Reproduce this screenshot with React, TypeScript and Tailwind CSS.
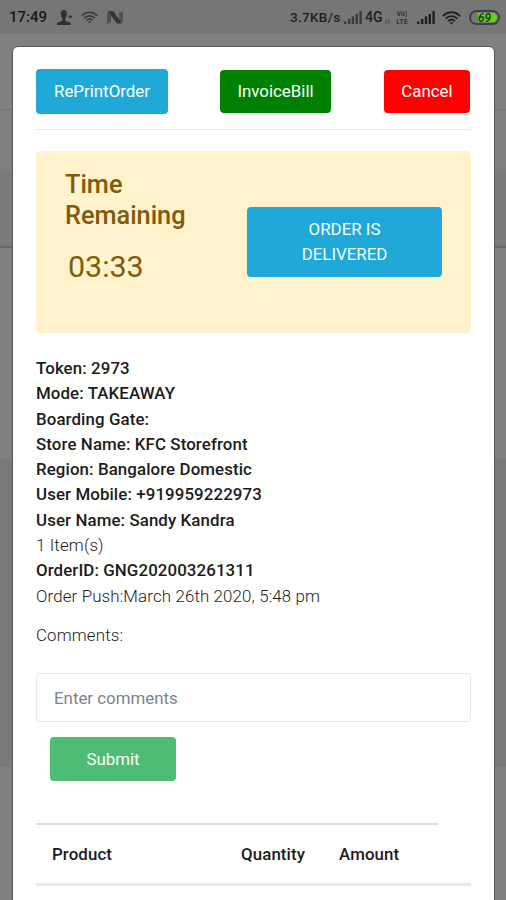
import clsx from "clsx";

const details = [
  { text: "Token: 2973", bold: true },
  { text: "Mode: TAKEAWAY", bold: true },
  { text: "Boarding Gate:", bold: true },
  { text: "Store Name: KFC Storefront", bold: true },
  { text: "Region: Bangalore Domestic", bold: true },
  { text: "User Mobile: +919959222973", bold: true },
  { text: "User Name: Sandy Kandra", bold: true },
  { text: "1 Item(s)", bold: false },
  { text: "OrderID: GNG202003261311", bold: true },
  { text: "Order Push:March 26th 2020, 5:48 pm", bold: false },
];

function SignalBars({ className }: { className?: string }) {
  return (
    <svg viewBox="0 0 18 13" className={clsx("h-[13px] w-[18px]", className)} fill="currentColor">
      <rect x="0" y="10.5" width="2.4" height="2.5" />
      <rect x="4" y="8" width="2.4" height="5" />
      <rect x="7.8" y="5.5" width="2.4" height="7.5" />
      <rect x="11.6" y="3" width="2.4" height="10" />
      <rect x="15.4" y="0" width="2.4" height="13" />
    </svg>
  );
}

function WifiIcon({ className }: { className?: string }) {
  return (
    <svg viewBox="0 0 20 14" className={className} fill="none" stroke="currentColor" strokeWidth="2">
      <path d="M1 5C6-.4 14-.4 19 5" />
      <path d="M3.8 7.700c3.500-3.600 8.900-3.600 12.400 0" />
      <path d="M6.600 10.400c2-2 4.800-2 6.800 0" />
      <path d="M8 11.500h4L10 14z" fill="currentColor" stroke="none" />
    </svg>
  );
}

function StatusBar() {
  return (
    <div className="flex h-[34px] items-center bg-[#767676] pt-px text-[#202020]">
      <span className="ml-[9px] w-[39px] text-[15px] font-medium leading-[33px] text-[#181818]">17:49</span>
      <svg viewBox="0 0 17 16" className="ml-[8px] h-[15px] w-[17px] text-[#303030]" fill="currentColor">
        <path d="M7.800 0C5.700 0 4.600 1.600 4.600 3.900c0 2.300.8 3.900 1.600 5V11.500L.5 13.700V16h14.500v-2.300L9.400 11.500V8.900c.8-1.100 1.600-2.700 1.600-5C11 1.600 9.900 0 7.800 0z" />
        <path d="M13 6.500h1V5.500h1.400v1h1v1.400h-1v1H14v-1h-1z" />
      </svg>
      <WifiIcon className="ml-[8px] h-[13px] w-[17px] text-[#3b3b3b]" />
      <svg viewBox="0 0 16 13" className="ml-[9px] h-[13px] w-[16px]">
        <path d="M0 1.500 4 .5v10.500L0 13zM12 2l4-2v10.500l-4 2z" fill="#505050" />
        <path d="M1 0h5.200l8.800 12.500H9.800z" fill="#363636" />
      </svg>
      <div className="ml-auto flex h-full items-center pr-[6px]">
        <span className="w-[51px] whitespace-nowrap text-[13.500px] font-medium tracking-[0.300px]">3.7KB/s</span>
        <SignalBars className="ml-[3px] text-[#3b3b3b]" />
        <span className="ml-[3px] w-[18px] text-[14px] font-medium">4G</span>
        <svg viewBox="0 0 6 5" className="mt-[7px] ml-[2px] h-[5px] w-[5px] text-[#484848]" fill="none" stroke="currentColor">
          <path d="M1.500 0v5M0 3.500 1.500 5M4.500 5V0M6 1.500 4.500 0" />
        </svg>
        <div className="ml-[4px] flex w-[16px] flex-col items-center text-[7px] font-bold leading-[8px] text-[#333]">
          <span className="block h-[8px] overflow-hidden">Vo)</span>
          <span className="block h-[8px] overflow-hidden">LTE</span>
        </div>
        <SignalBars className="ml-[7px]" />
        <WifiIcon className="ml-[7px] h-[14px] w-[19px]" />
        <div className="ml-[8px] flex h-[15px] w-[31px] items-center rounded-full border-2 border-[#404040] bg-[#777] p-px">
          <div className="flex h-full w-full items-center justify-center rounded-full bg-linear-to-r from-[#777777] from-25% to-[#65d314] to-25% text-[12px] font-medium italic leading-none text-[#17330a]">
            69
          </div>
        </div>
      </div>
    </div>
  );
}

// page content dimmed behind the modal
function DimmedPage() {
  return (
    <div className="flex flex-1 flex-col bg-[#808080]">
      <div className="h-[76px] border-b border-[#707070]" />
      <div className="h-[62px] bg-[#7f7f7f]" />
      <div className="h-[76px] border-b-2 border-[#676767] bg-[#7a7a7a]" />
      <div className="h-[211px]" />
      <div className="h-[308px] bg-[#797979]" />
    </div>
  );
}

export default function App() {
  return (
    <div className="relative flex h-[900px] w-[506px] flex-col overflow-hidden font-['Roboto',sans-serif]">
      <StatusBar />
      <DimmedPage />

      {/* Modal */}
      <div className="absolute top-[46px] left-[12px] h-[870px] w-[483px] rounded-[6px] border border-[#585858] bg-white px-[23px] text-[16.870px] leading-[25.300px] text-[#1c1c1c]">
        <div className="flex h-[83px] items-start justify-between border-b border-[#ebebeb] pt-[22px] pr-px">
          <button className="h-[45px] w-[132px] rounded-[4px] bg-[#20a8d8] text-white">RePrintOrder</button>
          <button className="mt-px mr-px h-[43px] w-[111px] rounded-[4px] bg-[#008000] text-white">InvoiceBill</button>
          <button className="mt-px h-[43px] w-[86px] rounded-[4px] bg-[#ff0000] text-white">Cancel</button>
        </div>

        <div className="mt-[21px] flex h-[182px] w-[435px] rounded-[4px] bg-[#fff2cd] text-[#7f5b0b]">
          <div className="ml-[29px] w-[182px] pt-[19px]">
            <h4 className="w-[130px] text-[25.300px] font-medium leading-[30.500px]">Time Remaining</h4>
            <p className="mt-[18px] ml-[3px] text-[30.400px] leading-[36px]">03:33</p>
          </div>
          <button className="mt-[56px] h-[70px] w-[195px] rounded-[4px] bg-[#20a8d8] px-[40px] text-[#f4fcff]">
            ORDER IS DELIVERED
          </button>
        </div>

        <div className="mt-[23px]">
          {details.map((d) => (
            <p
              key={d.text}
              className={clsx("whitespace-nowrap", d.bold ? "font-medium tracking-[0.100px]" : "font-light tracking-[0.140px]")}
            >
              {d.text}
            </p>
          ))}
        </div>
        <p className="mt-[14px] font-light tracking-[0.140px]">Comments:</p>

        <input
          type="text"
          placeholder="Enter comments"
          className="mt-[25px] block h-[49px] w-[435px] rounded-[4px] border-[1.500px] border-[#e6eaec] px-[17px] placeholder:text-[#7b858d]"
        />
        <button className="mt-[15px] ml-[14px] block h-[44px] w-[126px] rounded-[4px] bg-[#4dbd74] text-white">Submit</button>

        {/* Items table */}
        <div className="mt-[42px] w-[402px] border-t-2 border-[#dfdfdf]" />
        <div className="flex h-[61px] w-[435px] items-center border-b-[3px] border-[#e8e8e8] font-medium tracking-[0.100px]">
          <span className="ml-[16px] w-[189px]">Product</span>
          <span className="w-[98px]">Quantity</span>
          <span>Amount</span>
        </div>
      </div>
    </div>
  );
}
